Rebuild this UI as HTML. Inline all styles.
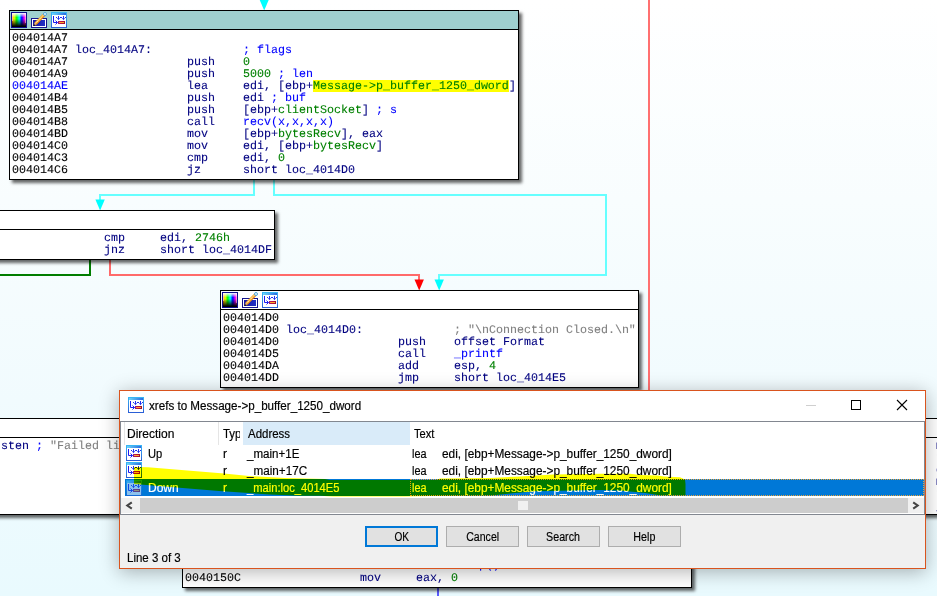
<!DOCTYPE html>
<html lang="en"><head><meta charset="utf-8"><title>xrefs to Message-&gt;p_buffer_1250_dword</title>
<style>
html,body{margin:0;padding:0}
body{width:937px;height:596px;overflow:hidden;position:relative;background:linear-gradient(to bottom,#ffffff 0,#f8fdfe 200px,#f1fbfe 400px,#e9fafe 596px);font-family:"Liberation Sans",sans-serif}
.blk{position:absolute;border:1px solid #000;background:#fff;box-shadow:3px 3px 3px 0 rgba(0,0,0,.6)}
.hd{position:absolute;left:0;top:0;right:0;height:18px;border-bottom:1px solid #000;background:#fff}
.hd.t{background:#9fd0cf}
.ic{position:absolute;display:block}
.bd{position:absolute;top:21px;font-family:"Liberation Mono","DejaVu Sans Mono",monospace;font-size:11.667px;line-height:12px;text-rendering:geometricPrecision;white-space:pre}
.r{position:relative;height:12px}
.r span{position:absolute;top:0;height:12px;-webkit-text-stroke:0.1px currentColor}
.a{color:#000}.n{color:#000080}.g{color:#008000}.b{color:#0000ff}.c{color:#808080}
.hl{background:#ffff00}
svg.edges{position:absolute;left:0;top:0}
/* dialog */
.dlg{position:absolute;left:119px;top:390px;width:805px;height:177px;border:1px solid #d9541e;background:#f0f0f0;box-shadow:0 3px 18px 0 rgba(0,0,0,.3);font-size:12px;color:#000;-webkit-text-stroke:0.18px currentColor}
.tb{position:absolute;left:0;top:0;right:0;height:30px;background:#fff}
.tb .tt{position:absolute;left:29px;top:8px;font-size:12px;line-height:14px;white-space:pre}
.sx{display:inline-block;white-space:pre}
.list{position:absolute;left:0;top:30px;width:803px;height:92px;border:1px solid #828790;background:#fff;overflow:hidden}
.lh{position:absolute;top:1px;height:22px;line-height:23px;white-space:pre}
.cell{position:absolute;white-space:pre;line-height:17px;height:17px;margin-top:1px}
.btn{position:absolute;top:135px;width:71px;height:19px;border:1px solid #adadad;background:#e1e1e1;text-align:center;line-height:21px;font-size:12px}
.btn.def{border:2px solid #0078d7;width:69px;height:17px;line-height:19px}
</style></head>
<body>
<svg width="0" height="0" style="position:absolute"><defs>
<linearGradient id="xg" x1="0" y1="0" x2="0" y2="1"><stop offset="0" stop-color="#38b6f5"/><stop offset="1" stop-color="#2a5fd6"/></linearGradient>
<linearGradient id="rb" x1="0" y1="0" x2="1" y2="0"><stop offset="0" stop-color="#ff7000"/><stop offset="0.14" stop-color="#ffff00"/><stop offset="0.34" stop-color="#00ff00"/><stop offset="0.52" stop-color="#00ffff"/><stop offset="0.70" stop-color="#0000ff"/><stop offset="0.88" stop-color="#ff00ff"/><stop offset="1" stop-color="#ff50b0"/></linearGradient>
<linearGradient id="pb" x1="0" y1="0" x2="1" y2="0"><stop offset="0" stop-color="#1a1aa6"/><stop offset="1" stop-color="#2030c4"/></linearGradient>
<linearGradient id="bk" x1="0" y1="0" x2="0" y2="1"><stop offset="0" stop-color="#fff" stop-opacity="1"/><stop offset="0.32" stop-color="#fff" stop-opacity="0"/><stop offset="0.42" stop-color="#000" stop-opacity="0"/><stop offset="0.95" stop-color="#000" stop-opacity="1"/></linearGradient>
<linearGradient id="xt" x1="0" y1="0" x2="1" y2="0"><stop offset="0" stop-color="#6ad6fa"/><stop offset="1" stop-color="#2b6be0"/></linearGradient>
<linearGradient id="xr" x1="0" y1="0" x2="1" y2="0"><stop offset="0" stop-color="#8c1c8c"/><stop offset="0.4" stop-color="#c01040"/><stop offset="1" stop-color="#98102c"/></linearGradient>
</defs></svg><svg class="edges" width="937" height="596" viewBox="0 0 937 596" shape-rendering="crispEdges">
<g fill="none" stroke-width="2">
<path d="M254 180V195H100V201" stroke="#66ffff"/>
<path d="M274 180V195H606V275H439V281" stroke="#66ffff"/>
<path d="M110 260V275H419V281" stroke="#ff6a6a"/>
<path d="M90 260V275H0" stroke="#007d00"/>
<path d="M649 0V392" stroke="#ff7070"/>
<path d="M438 588V596" stroke="#5a5aff"/>
</g>
<g shape-rendering="geometricPrecision">
<path d="M259.3 -1h9.8L264.2 10.5z" fill="#00ffff"/>
<path d="M95.4 199.6h9.4L100.1 210.6z" fill="#00ffff"/>
<path d="M414.5 279.6h9.4L419.2 290.6z" fill="#ff0000"/>
<path d="M434.5 279.6h9.4L439.2 290.6z" fill="#00ffff"/>
</g>
</svg><div class="blk " style="left:9px;top:10px;width:508px;height:168px"><div class="hd t"><svg class="ic" style="left:1px;top:1px" width="16" height="16" viewBox="0 0 16 16"><rect x="0" y="0" width="16" height="16" fill="#0c0c8c"/><rect x="1" y="1" width="14" height="14" fill="url(#rb)"/><rect x="1" y="1" width="14" height="14" fill="url(#bk)"/><rect x="1" y="1" width="1" height="8" fill="#fff" fill-opacity="0.5"/><rect x="14" y="1" width="1" height="10" fill="#fff" fill-opacity="0.45"/></svg><svg class="ic" style="left:21px;top:1px" width="16" height="16" viewBox="0 0 16 16"><rect x="0.5" y="6.5" width="15" height="9" fill="#fff" stroke="#14148c"/><rect x="2" y="8" width="12" height="6" fill="url(#pb)"/><path d="M4.300 11.700L13.100 2.600" stroke="#f9a81c" stroke-width="2.700" stroke-linecap="butt"/><path d="M5.300 12.600L14 3.600" stroke="#e2761e" stroke-width="0.900"/><path d="M4.300 11.500L12.900 2.600" stroke="#fff" stroke-width="0.900" stroke-dasharray="1.500 0.500"/><path d="M3.300 10.900L2.500 13.700 5.400 13z" fill="#f0b060"/><path d="M3 11.900L2.300 14 4.400 13.500z" fill="#000"/><circle cx="14" cy="2" r="1.500" fill="#eef8ff" stroke="#4aa2da" stroke-width="1"/></svg><svg class="ic" style="left:41px;top:1px" width="16" height="16" viewBox="0 0 16 16"><rect x="0.5" y="0.5" width="15" height="15" fill="#fff" stroke="url(#xg)"/><rect x="1" y="1" width="14" height="2" fill="url(#xt)"/><path d="M2.5 4v6.5h4M4.5 8.500l2 2-2 2" fill="none" stroke="#1c1cf0" stroke-width="1"/><path d="M5 5.500h1M9 5.500h2M14 5.500h1M7.500 4v3M12.500 4v3" fill="none" stroke="#2030ee" stroke-width="1"/><path d="M6 6h3L7.500 8.200zM11 6h3L12.500 8.200z" fill="#2030ee"/><rect x="7" y="9" width="7" height="3" fill="url(#xr)"/><rect x="8" y="10" width="5" height="1" fill="#ffa62e"/></svg></div><div class="bd" style="left:2px"><div class="r"><span class="a" style="left:0px">004014A7</span></div><div class="r"><span class="a" style="left:0px">004014A7</span><span class="n" style="left:63px">loc_4014A7:</span><span class="b" style="left:231px">; flags</span></div><div class="r"><span class="a" style="left:0px">004014A7</span><span class="n" style="left:175px">push</span><span class="g" style="left:231px">0</span></div><div class="r"><span class="a" style="left:0px">004014A9</span><span class="n" style="left:175px">push</span><span class="g" style="left:231px">5000</span><span class="b" style="left:266px">; len</span></div><div class="r"><span class="b" style="left:0px">004014AE</span><span class="n" style="left:175px">lea</span><span class="n" style="left:231px">edi, [ebp+</span><span class="g hl" style="left:301px">Message-&gt;p_buffer_1250_dword</span><span class="n" style="left:497px">]</span></div><div class="r"><span class="a" style="left:0px">004014B4</span><span class="n" style="left:175px">push</span><span class="n" style="left:231px">edi</span><span class="b" style="left:259px">; buf</span></div><div class="r"><span class="a" style="left:0px">004014B5</span><span class="n" style="left:175px">push</span><span class="n" style="left:231px">[ebp+</span><span class="g" style="left:266px">clientSocket</span><span class="n" style="left:350px">]</span><span class="b" style="left:364px">; s</span></div><div class="r"><span class="a" style="left:0px">004014B8</span><span class="n" style="left:175px">call</span><span class="b" style="left:231px">recv(x,x,x,x)</span></div><div class="r"><span class="a" style="left:0px">004014BD</span><span class="n" style="left:175px">mov</span><span class="n" style="left:231px">[ebp+</span><span class="g" style="left:266px">bytesRecv</span><span class="n" style="left:329px">], eax</span></div><div class="r"><span class="a" style="left:0px">004014C0</span><span class="n" style="left:175px">mov</span><span class="n" style="left:231px">edi, [ebp+</span><span class="g" style="left:301px">bytesRecv</span><span class="n" style="left:364px">]</span></div><div class="r"><span class="a" style="left:0px">004014C3</span><span class="n" style="left:175px">cmp</span><span class="n" style="left:231px">edi, </span><span class="g" style="left:266px">0</span></div><div class="r"><span class="a" style="left:0px">004014C6</span><span class="n" style="left:175px">jz</span><span class="n" style="left:231px">short loc_4014D0</span></div></div></div><div class="blk " style="left:-200px;top:210px;width:473px;height:48px"><div class="hd w"></div><div class="bd" style="left:303px"><div class="r"><span class="n" style="left:0px">cmp</span><span class="n" style="left:56px">edi, </span><span class="g" style="left:91px">2746h</span></div><div class="r"><span class="n" style="left:0px">jnz</span><span class="n" style="left:56px">short loc_4014DF</span></div></div></div><div class="blk " style="left:220px;top:290px;width:417px;height:96px"><div class="hd w"><svg class="ic" style="left:1px;top:1px" width="16" height="16" viewBox="0 0 16 16"><rect x="0" y="0" width="16" height="16" fill="#0c0c8c"/><rect x="1" y="1" width="14" height="14" fill="url(#rb)"/><rect x="1" y="1" width="14" height="14" fill="url(#bk)"/><rect x="1" y="1" width="1" height="8" fill="#fff" fill-opacity="0.5"/><rect x="14" y="1" width="1" height="10" fill="#fff" fill-opacity="0.45"/></svg><svg class="ic" style="left:21px;top:1px" width="16" height="16" viewBox="0 0 16 16"><rect x="0.5" y="6.5" width="15" height="9" fill="#fff" stroke="#14148c"/><rect x="2" y="8" width="12" height="6" fill="url(#pb)"/><path d="M4.300 11.700L13.100 2.600" stroke="#f9a81c" stroke-width="2.700" stroke-linecap="butt"/><path d="M5.300 12.600L14 3.600" stroke="#e2761e" stroke-width="0.900"/><path d="M4.300 11.500L12.900 2.600" stroke="#fff" stroke-width="0.900" stroke-dasharray="1.500 0.500"/><path d="M3.300 10.900L2.500 13.700 5.400 13z" fill="#f0b060"/><path d="M3 11.900L2.300 14 4.400 13.500z" fill="#000"/><circle cx="14" cy="2" r="1.500" fill="#eef8ff" stroke="#4aa2da" stroke-width="1"/></svg><svg class="ic" style="left:41px;top:1px" width="16" height="16" viewBox="0 0 16 16"><rect x="0.5" y="0.5" width="15" height="15" fill="#fff" stroke="url(#xg)"/><rect x="1" y="1" width="14" height="2" fill="url(#xt)"/><path d="M2.5 4v6.5h4M4.5 8.500l2 2-2 2" fill="none" stroke="#1c1cf0" stroke-width="1"/><path d="M5 5.500h1M9 5.500h2M14 5.500h1M7.500 4v3M12.500 4v3" fill="none" stroke="#2030ee" stroke-width="1"/><path d="M6 6h3L7.500 8.200zM11 6h3L12.500 8.200z" fill="#2030ee"/><rect x="7" y="9" width="7" height="3" fill="url(#xr)"/><rect x="8" y="10" width="5" height="1" fill="#ffa62e"/></svg></div><div class="bd" style="left:2px"><div class="r"><span class="a" style="left:0px">004014D0</span></div><div class="r"><span class="a" style="left:0px">004014D0</span><span class="n" style="left:63px">loc_4014D0:</span><span class="c" style="left:231px">; "\nConnection Closed.\n"</span></div><div class="r"><span class="a" style="left:0px">004014D0</span><span class="n" style="left:175px">push</span><span class="n" style="left:231px">offset Format</span></div><div class="r"><span class="a" style="left:0px">004014D5</span><span class="n" style="left:175px">call</span><span class="b" style="left:231px">_printf</span></div><div class="r"><span class="a" style="left:0px">004014DA</span><span class="n" style="left:175px">add</span><span class="n" style="left:231px">esp, </span><span class="g" style="left:266px">4</span></div><div class="r"><span class="a" style="left:0px">004014DD</span><span class="n" style="left:175px">jmp</span><span class="n" style="left:231px">short loc_4014E5</span></div></div></div><div class="blk " style="left:-300px;top:418px;width:448px;height:95px"><div class="hd w"></div><div class="bd" style="left:300px"><div class="r"><span class="n" style="left:0px">sten</span><span class="b" style="left:35px">;</span><span class="c" style="left:49px">"Failed listen\n"</span></div></div></div><div class="blk " style="left:900px;top:418px;width:198px;height:95px"><div class="hd w"></div><div class="bd" style="left:35px"><div class="r"><span class="n" style="left:0px">mov</span></div><div class="r"><span class="n" style="left:0px">push</span></div><div class="r"><span class="n" style="left:0px">call</span></div><div class="r"><span class="n" style="left:0px">mov</span></div><div class="r"><span class="n" style="left:0px">push</span></div><div class="r"><span class="n" style="left:0px">jmp</span></div></div></div><div class="blk " style="left:182px;top:502px;width:508px;height:84px"><div class="hd w"></div><div class="bd" style="left:2px"><div class="r"></div><div class="r"></div><div class="r"></div><div class="r" style="top:-1px"><span class="a" style="left:0px">00401507</span><span class="n" style="left:175px">call</span><span class="b" style="left:231px">WSACleanup()</span></div><div class="r"><span class="a" style="left:0px">0040150C</span><span class="n" style="left:175px">mov</span><span class="n" style="left:231px">eax, </span><span class="g" style="left:266px">0</span></div></div></div><div class="dlg"><div class="tb"><svg class="ic" style="left:8px;top:6px" width="16" height="16" viewBox="0 0 16 16"><rect x="0.5" y="0.5" width="15" height="15" fill="#fff" stroke="url(#xg)"/><rect x="1" y="1" width="14" height="2" fill="url(#xt)"/><path d="M2.5 4v6.5h4M4.5 8.500l2 2-2 2" fill="none" stroke="#1c1cf0" stroke-width="1"/><path d="M5 5.500h1M9 5.500h2M14 5.500h1M7.500 4v3M12.500 4v3" fill="none" stroke="#2030ee" stroke-width="1"/><path d="M6 6h3L7.500 8.200zM11 6h3L12.500 8.200z" fill="#2030ee"/><rect x="7" y="9" width="7" height="3" fill="url(#xr)"/><rect x="8" y="10" width="5" height="1" fill="#ffa62e"/></svg><span class="tt"><span class="sx" style="transform:scaleX(0.969);transform-origin:left center">xrefs to Message-&gt;p_buffer_1250_dword</span></span><svg class="ic" style="left:680px;top:0" width="125" height="30" viewBox="0 0 125 30"><path d="M6 14.5h10" stroke="#cfcfcf" stroke-width="1"/><rect x="51.5" y="9.5" width="9" height="9" fill="none" stroke="#000" stroke-width="1"/><path d="M97 9l10 10M107 9l-10 10" stroke="#000" stroke-width="1.1"/></svg></div><div class="list"><div style="position:absolute;left:122px;top:0;width:167px;height:23px;background:#d9ebf9"></div><div style="position:absolute;left:3px;top:0;width:1px;height:23px;background:#e5e5e5"></div><div style="position:absolute;left:97px;top:0;width:1px;height:23px;background:#e5e5e5"></div><div class="lh" style="left:6px"><span class="sx" style="transform:scaleX(1.0);transform-origin:left center">Direction</span></div><div class="lh" style="left:102px;width:17px;overflow:hidden"><span class="sx" style="transform:scaleX(0.95);transform-origin:left center">Type</span></div><div class="lh" style="left:127px"><span class="sx" style="transform:scaleX(0.956);transform-origin:left center">Address</span></div><div class="lh" style="left:293px"><span class="sx" style="transform:scaleX(0.926);transform-origin:left center">Text</span></div><div style="position:absolute;left:4px;top:57px;width:799px;height:17px;background:#0078d7"></div><svg class="ic" style="left:5px;top:23px" width="16" height="16" viewBox="0 0 16 16"><rect x="0.5" y="0.5" width="15" height="15" fill="#fff" stroke="url(#xg)"/><rect x="1" y="1" width="14" height="2" fill="url(#xt)"/><path d="M2.5 4v6.5h4M4.5 8.500l2 2-2 2" fill="none" stroke="#1c1cf0" stroke-width="1"/><path d="M5 5.500h1M9 5.500h2M14 5.500h1M7.500 4v3M12.500 4v3" fill="none" stroke="#2030ee" stroke-width="1"/><path d="M6 6h3L7.500 8.200zM11 6h3L12.500 8.200z" fill="#2030ee"/><rect x="7" y="9" width="7" height="3" fill="url(#xr)"/><rect x="8" y="10" width="5" height="1" fill="#ffa62e"/></svg><div class="cell" style="left:27px;top:23px;color:#000"><span class="sx" style="transform:scaleX(0.93);transform-origin:left center">Up</span></div><div class="cell" style="left:102px;top:23px;color:#000">r</div><div class="cell" style="left:126px;top:23px;color:#000"><span class="sx" style="transform:scaleX(0.965);transform-origin:left center">_main+1E</span></div><div class="cell" style="left:291px;top:23px;color:#000"><span class="sx" style="transform:scaleX(0.905);transform-origin:left center">lea</span></div><div class="cell" style="left:321px;top:23px;color:#000"><span class="sx" style="transform:scaleX(0.988);transform-origin:left center">edi, [ebp+Message-&gt;p_buffer_1250_dword]</span></div><svg class="ic" style="left:5px;top:40px" width="16" height="16" viewBox="0 0 16 16"><rect x="0.5" y="0.5" width="15" height="15" fill="#fff" stroke="url(#xg)"/><rect x="1" y="1" width="14" height="2" fill="url(#xt)"/><path d="M2.5 4v6.5h4M4.5 8.500l2 2-2 2" fill="none" stroke="#1c1cf0" stroke-width="1"/><path d="M5 5.500h1M9 5.500h2M14 5.500h1M7.500 4v3M12.500 4v3" fill="none" stroke="#2030ee" stroke-width="1"/><path d="M6 6h3L7.500 8.200zM11 6h3L12.500 8.200z" fill="#2030ee"/><rect x="7" y="9" width="7" height="3" fill="url(#xr)"/><rect x="8" y="10" width="5" height="1" fill="#ffa62e"/></svg><div class="cell" style="left:27px;top:40px;color:#000"><span class="sx" style="transform:scaleX(1);transform-origin:left center"></span></div><div class="cell" style="left:102px;top:40px;color:#000">r</div><div class="cell" style="left:126px;top:40px;color:#000"><span class="sx" style="transform:scaleX(0.975);transform-origin:left center">_main+17C</span></div><div class="cell" style="left:291px;top:40px;color:#000"><span class="sx" style="transform:scaleX(0.905);transform-origin:left center">lea</span></div><div class="cell" style="left:321px;top:40px;color:#000"><span class="sx" style="transform:scaleX(0.988);transform-origin:left center">edi, [ebp+Message-&gt;p_buffer_1250_dword]</span></div><svg class="ic" style="left:5px;top:58px" width="16" height="16" viewBox="0 0 16 16"><rect x="0.5" y="0.5" width="15" height="15" fill="#fff" stroke="url(#xg)"/><rect x="1" y="1" width="14" height="2" fill="url(#xt)"/><path d="M2.5 4v6.5h4M4.5 8.500l2 2-2 2" fill="none" stroke="#1c1cf0" stroke-width="1"/><path d="M5 5.500h1M9 5.500h2M14 5.500h1M7.500 4v3M12.500 4v3" fill="none" stroke="#2030ee" stroke-width="1"/><path d="M6 6h3L7.500 8.200zM11 6h3L12.500 8.200z" fill="#2030ee"/><rect x="7" y="9" width="7" height="3" fill="url(#xr)"/><rect x="8" y="10" width="5" height="1" fill="#ffa62e"/><rect x="0" y="0" width="16" height="16" fill="#0078d7" fill-opacity="0.45"/></svg><div class="cell" style="left:27px;top:57px;color:#fff"><span class="sx" style="transform:scaleX(1.0);transform-origin:left center">Down</span></div><div class="cell" style="left:102px;top:57px;color:#fff">r</div><div class="cell" style="left:126px;top:57px;color:#fff"><span class="sx" style="transform:scaleX(0.93);transform-origin:left center">_main:loc_4014E5</span></div><div class="cell" style="left:291px;top:57px;color:#fff"><span class="sx" style="transform:scaleX(0.905);transform-origin:left center">lea</span></div><div class="cell" style="left:321px;top:57px;color:#fff"><span class="sx" style="transform:scaleX(0.988);transform-origin:left center">edi, [ebp+Message-&gt;p_buffer_1250_dword]</span></div><div style="position:absolute;left:289px;top:57px;width:514px;height:17px;border:1px dotted #e8a33d;box-sizing:border-box"></div><svg class="ic" style="left:0;top:0;mix-blend-mode:multiply" width="803" height="92" viewBox="121 422 803 92"><path d="M134 467 L148 467.3 L224 473.6 L249 476 L285 478 L325 479 L330 480 L436 480 L440 478.6 L490 478 L520 476.5 L553 474.6 L600 473.8 L630 473.8 L640 475 L658 475.5 L664 476.6 L680 477.2 L685 479.5 L685.5 484 L685.5 495.6 L661 495.6 L645 493 L620 490.5 L600 490 L535 491.2 L510 493.5 L492 495.4 L430 496 L404 496.6 L333 496.6 L320 495.8 L300 495.8 L270 494.5 L219 491 L134 484 Z" fill="#ffff00"/></svg><div style="position:absolute;left:0;top:76px;width:803px;height:15px;background:#f0f0f0"></div><div style="position:absolute;left:19px;top:76px;width:768px;height:15px;background:#cdcdcd"></div><div style="position:absolute;left:397px;top:79px;width:10px;height:9px;background:#f0f0f0"></div><svg class="ic" style="left:0;top:76px" width="803" height="15" viewBox="0 0 803 15"><path d="M10.800 4.300L6.300 7.500 10.800 10.700M792.200 4.300L796.700 7.500 792.200 10.700" fill="none" stroke="#454545" stroke-width="2.100"/></svg></div><div class="btn def" style="left:245px"><span class="sx" style="transform:scaleX(0.84);transform-origin:center center">OK</span></div><div class="btn " style="left:326px"><span class="sx" style="transform:scaleX(0.88);transform-origin:center center">Cancel</span></div><div class="btn " style="left:407px"><span class="sx" style="transform:scaleX(0.89);transform-origin:center center">Search</span></div><div class="btn " style="left:488px"><span class="sx" style="transform:scaleX(0.89);transform-origin:center center">Help</span></div><div style="position:absolute;left:7px;top:160px;line-height:14px;white-space:pre"><span class="sx" style="transform:scaleX(0.958);transform-origin:left center">Line 3 of 3</span></div></div>
</body></html>
